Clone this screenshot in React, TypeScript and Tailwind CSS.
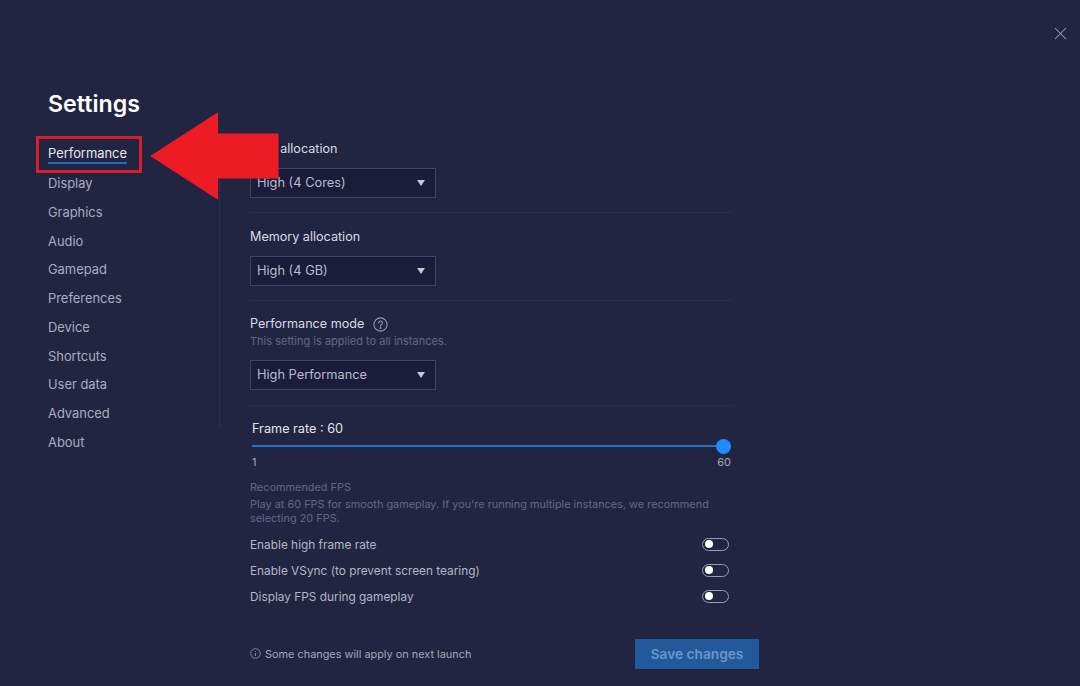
import React from 'react';
import { X } from 'lucide-react';

const navItems = ['Performance', 'Display', 'Graphics', 'Audio', 'Gamepad', 'Preferences', 'Device', 'Shortcuts', 'User data', 'Advanced', 'About'];

function Select({ value }: { value: string }) {
  return (
    <div className="flex h-[30px] w-[186px] items-center justify-between border border-[#3f4368] bg-[#1a1c3a] pl-[6px] pr-[10px] text-[12.8px] text-[#b9bbcf]">
      <span>{value}</span>
      <span className="h-0 w-0 border-x-[4.5px] border-t-[6px] border-x-transparent border-t-[#c3c5d6]" />
    </div>
  );
}

function Toggle() {
  return (
    <div className="flex h-[13px] w-[27px] items-center rounded-full border border-[#9a9cb2] pl-[2px]">
      <span className="h-[8px] w-[8px] rounded-full bg-white" />
    </div>
  );
}

export default function App() {
  return (
    <main className="relative flex h-[686px] w-[1080px] flex-col overflow-hidden bg-[#222541] pl-[48px] pt-[91px] font-['Inter',sans-serif]">
      <X className="absolute left-[1050px] top-[23px] text-[#9a9cb8]" size={21} strokeWidth={1.2} />

      <h1 className="h-[26px] text-[23.2px] font-semibold leading-[26px] text-white">Settings</h1>

      <div className="flex">
        <nav className="mt-[23.4px] flex h-[288px] w-[172px] flex-col border-r border-[#2a2d4c] text-[12.9px] text-[#a9abc0]">
          {navItems.map((item, i) => (
            <div key={item} className="flex h-[28.8px] shrink-0 items-center">
              {i === 0 ? <span className="border-b-2 border-[#1f6cc0] pt-[1px] leading-[16px] text-[#e6e7ef]">{item}</span> : item}
            </div>
          ))}
        </nav>

        <section className="ml-[30px] flex w-[509px] flex-col">
          <div className="flex h-[96px] w-[483px] flex-col border-b border-[#2a2d4c] pt-[24px]">
            <div className="h-[16px] text-[12.6px] leading-[16px] text-[#d9dae6]">CPU allocation</div>
            <div className="mt-[11px]"><Select value="High (4 Cores)" /></div>
          </div>

          <div className="flex h-[88px] w-[483px] flex-col border-b border-[#2a2d4c] pt-[16px]">
            <div className="h-[16px] text-[12.6px] leading-[16px] text-[#d9dae6]">Memory allocation</div>
            <div className="mt-[11px]"><Select value="High (4 GB)" /></div>
          </div>

          <div className="flex h-[105px] w-[483px] flex-col border-b border-[#2a2d4c] pt-[15px]">
            <div className="flex h-[16px] items-center gap-[9px] text-[12.6px] leading-[16px] text-[#d9dae6]">
              Performance mode
              <svg width="15" height="15" viewBox="0 0 15 15" fill="none" stroke="#9496ad" strokeWidth="1.1">
                <circle cx="7.5" cy="7.5" r="6.6" />
                <path d="M5.6 5.9a1.9 1.9 0 1 1 2.9 1.6c-.6.4-1 .8-1 1.6" strokeLinecap="round" />
                <circle cx="7.5" cy="11" r="0.4" fill="#9496ad" />
              </svg>
            </div>
            <div className="mt-[2px] h-[14px] text-[11px] leading-[14px] text-[#62658a]">This setting is applied to all instances.</div>
            <div className="mt-[12px]"><Select value="High Performance" /></div>
          </div>

          <div className="mt-[14px] w-[483px]">
            <div className="ml-[2px] h-[17px] pt-[1px] text-[12.7px] leading-[16px] text-[#e3e4ec]">Frame rate : 60</div>
            <div className="relative ml-[2px] mt-[8px] h-[2px] w-[471px] bg-[#2a6fc0]">
              <span className="absolute right-[-8px] top-[-6.5px] h-[15px] w-[15px] rounded-full bg-[#1e8bff]" />
            </div>
            <div className="mt-[8px] flex h-[14px] justify-between pl-[2px] text-[11px] leading-[14px] text-[#a3a5ba]">
              <span>1</span>
              <span className="pr-[2px]">60</span>
            </div>
          </div>

          <div className="mt-[11px] w-[483px] text-[10.9px] leading-[14px] text-[#62658a]">
            <div className="h-[14px]">Recommended FPS</div>
            <p className="mt-[3px]">Play at 60 FPS for smooth gameplay. If you&apos;re running multiple instances, we recommend selecting 20 FPS.</p>
          </div>

          <div className="mt-[6px] flex w-[479px] flex-col text-[11.85px] text-[#b3b5c8]">
            {['Enable high frame rate', 'Enable VSync (to prevent screen tearing)', 'Display FPS during gameplay'].map((label) => (
              <div key={label} className="flex h-[26px] items-center justify-between">
                <span className="pt-[3px]">{label}</span>
                <Toggle />
              </div>
            ))}
          </div>

          <div className="mt-[30px] flex items-center justify-between">
            <div className="flex items-center gap-[4px] text-[10.9px] text-[#a3a5ba]">
              <svg width="11" height="11" viewBox="0 0 11 11" fill="none" stroke="#8d8fa6" strokeWidth="0.9">
                <circle cx="5.5" cy="5.5" r="4.8" />
                <path d="M5.5 5v3M5.5 3v.8" />
              </svg>
              Some changes will apply on next launch
            </div>
            <button className="h-[30px] w-[124px] bg-[#22599d] text-[13.7px] font-semibold text-[#6f94c4]">Save changes</button>
          </div>
        </section>
      </div>

      {/* red annotation over the screenshot */}
      <div className="absolute left-[36px] top-[136px] h-[37px] w-[106px] border-[3px] border-[#d71f2a]" />
      <svg className="absolute left-[150px] top-[112px]" width="130" height="88" viewBox="0 0 130 88">
        <path d="M1 44 L67.5 1 L67.5 22 L128 22 L128 66 L67.5 66 L67.5 87 Z" fill="#ed1c24" stroke="#ed1c24" strokeLinejoin="round" />
      </svg>
    </main>
  );
}
